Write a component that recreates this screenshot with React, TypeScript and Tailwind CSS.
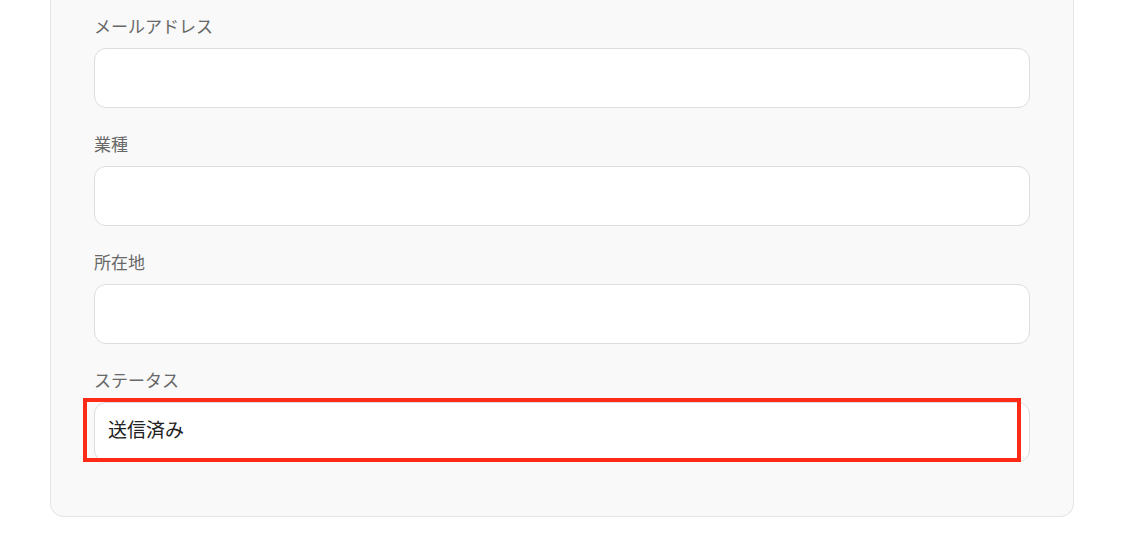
import React from 'react';

const fields = [
  { label: 'メールアドレス', value: '' },
  { label: '業種', value: '' },
  { label: '所在地', value: '' },
  { label: 'ステータス', value: '送信済み', highlight: true },
];

export default function App() {
  return (
    <div
      className="min-h-screen w-full bg-white"
      style={{ fontFamily: '"Noto Sans CJK JP", "Noto Sans", sans-serif' }}
    >
      <div className="ml-[50px] w-[1024px] rounded-b-[14px] border border-t-0 border-[#e5e5e5] bg-[#f9f9f9] px-[43px] pb-[54px] pt-[15px]">
        <div className="flex flex-col gap-[25px]">
          {fields.map((f) => (
            <div key={f.label} className="flex flex-col gap-[9px]">
              <label className="h-[24px] text-[17px] leading-[22px] text-[#686868]">{f.label}</label>
              <div className="relative">
                <div className="flex h-[60px] w-[936px] items-center rounded-[12px] border border-[#dddddd] bg-white px-[13px] pb-[6px] text-[19px] text-[#222222]">
                  {f.value}
                </div>
                {f.highlight && (
                  <div className="pointer-events-none absolute left-[-11px] top-[-4px] h-[64px] w-[938px] border-[4px] border-[#fd2a18]" />
                )}
              </div>
            </div>
          ))}
        </div>
      </div>
    </div>
  );
}
